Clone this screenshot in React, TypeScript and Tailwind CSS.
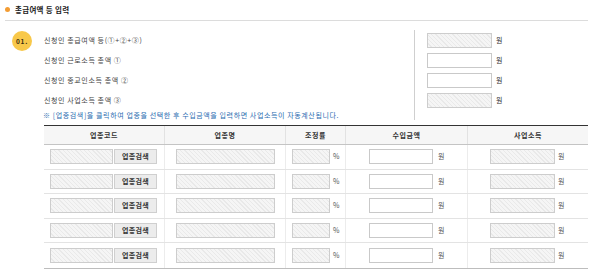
const hatch =
  'bg-[repeating-linear-gradient(45deg,#f5f5f5_0px,#f5f5f5_2px,#e9e9e9_2px,#e9e9e9_3px)]';

function HatchBox({ w }: { w: string }) {
  return <div className={`${w} h-[15px] border border-[#cdcdcd] ${hatch}`} />;
}

function WhiteBox({ w }: { w: string }) {
  return <div className={`${w} h-[15px] border border-[#c9c9c9] bg-white`} />;
}

const labels = [
  '신청인 총급여액 등(①+②+③)',
  '신청인 근로소득 총액 ①',
  '신청인 종교인소득 총액 ②',
  '신청인 사업소득 총액 ③',
];

const rows = [0, 1, 2, 3, 4];

export default function App() {
  return (
    <div className="w-[600px] h-[269px] overflow-hidden bg-white font-['Noto_Sans_CJK_KR','Noto_Sans',sans-serif] text-[7px] leading-none tracking-[0.6px] text-[#333]">
      <div className="ml-[5px] mr-[12px] h-[20.5px] flex items-center gap-[5px] border-b border-[#dcdcdc]">
        <span className="w-[5px] h-[5px] rounded-full bg-[#f39c33]" />
        <span className="text-[7.5px] font-bold tracking-[0.3px] text-[#222]">총급여액 등 입력</span>
      </div>

      <div className="flex mt-[9.5px]">
        <div className="w-[44px] shrink-0 pl-[12px] pt-[1px]">
          <div className="w-[20px] h-[20px] rounded-full bg-[#f8c84a] flex items-center justify-center text-[6.5px] font-bold tracking-[0.8px] text-[#3a2e10]">
            01.
          </div>
        </div>

        <div className="flex flex-col">
          <div className="flex">
            <div className="w-[371px] border-r border-[#cfcfcf] h-[90px]">
              {labels.map((l) => (
                <div key={l} className="h-[20px] flex items-center text-[#444]">
                  {l}
                </div>
              ))}
              <div className="h-[10px] flex items-center -ml-[1px] text-[#2a6cb0]">
                ※ [업종검색]을 클릭하여 업종을 선택한 후 수입금액을 입력하면 사업소득이 자동계산됩니다.
              </div>
            </div>
            <div className="pl-[12px]">
              {labels.map((l, i) => (
                <div key={l} className="h-[20px] flex items-center gap-[4px]">
                  {i === 0 || i === 3 ? <HatchBox w="w-[65px]" /> : <WhiteBox w="w-[65px]" />}
                  <span>원</span>
                </div>
              ))}
            </div>
          </div>

          <div className="mt-[5px] w-[544px] border-t border-[#333] border-b border-b-[#bdbdbd]">
            <div className="flex h-[19px] bg-[#f6f6f6] border-b border-[#c4c4c4] font-bold text-[#333]">
              <div className="w-[121px] flex items-center justify-center border-r border-[#e2e2e2]">업종코드</div>
              <div className="w-[121px] flex items-center justify-center border-r border-[#e2e2e2]">업종명</div>
              <div className="w-[60px] flex items-center justify-center border-r border-[#e2e2e2]">조정률</div>
              <div className="w-[122px] flex items-center justify-center border-r border-[#e2e2e2]">수입금액</div>
              <div className="flex-1 flex items-center justify-center">사업소득</div>
            </div>
            {rows.map((r) => (
              <div
                key={r}
                className={`flex h-[24.5px] ${r < 4 ? 'border-b border-[#e3e3e3]' : ''}`}
              >
                <div className="w-[121px] flex items-center pl-[6px] gap-[1px] border-r border-[#ececec]">
                  <HatchBox w="w-[63px]" />
                  <div className="w-[43px] h-[15px] border border-[#cfcfcf] bg-[#ececec] flex items-center justify-center font-bold tracking-[0.3px] text-[#333]">
                    업종검색
                  </div>
                </div>
                <div className="w-[121px] flex items-center justify-center border-r border-[#ececec]">
                  <HatchBox w="w-[99px]" />
                </div>
                <div className="w-[60px] flex items-center pl-[6px] gap-[3px] border-r border-[#ececec]">
                  <HatchBox w="w-[38px]" />
                  <span className="text-[#555]">%</span>
                </div>
                <div className="w-[122px] flex items-center pl-[23px] gap-[5px] border-r border-[#ececec]">
                  <WhiteBox w="w-[64px]" />
                  <span className="text-[#555]">원</span>
                </div>
                <div className="flex-1 flex items-center pl-[22px] gap-[3px]">
                  <HatchBox w="w-[65px]" />
                  <span className="text-[#555]">원</span>
                </div>
              </div>
            ))}
          </div>
        </div>
      </div>
    </div>
  );
}
